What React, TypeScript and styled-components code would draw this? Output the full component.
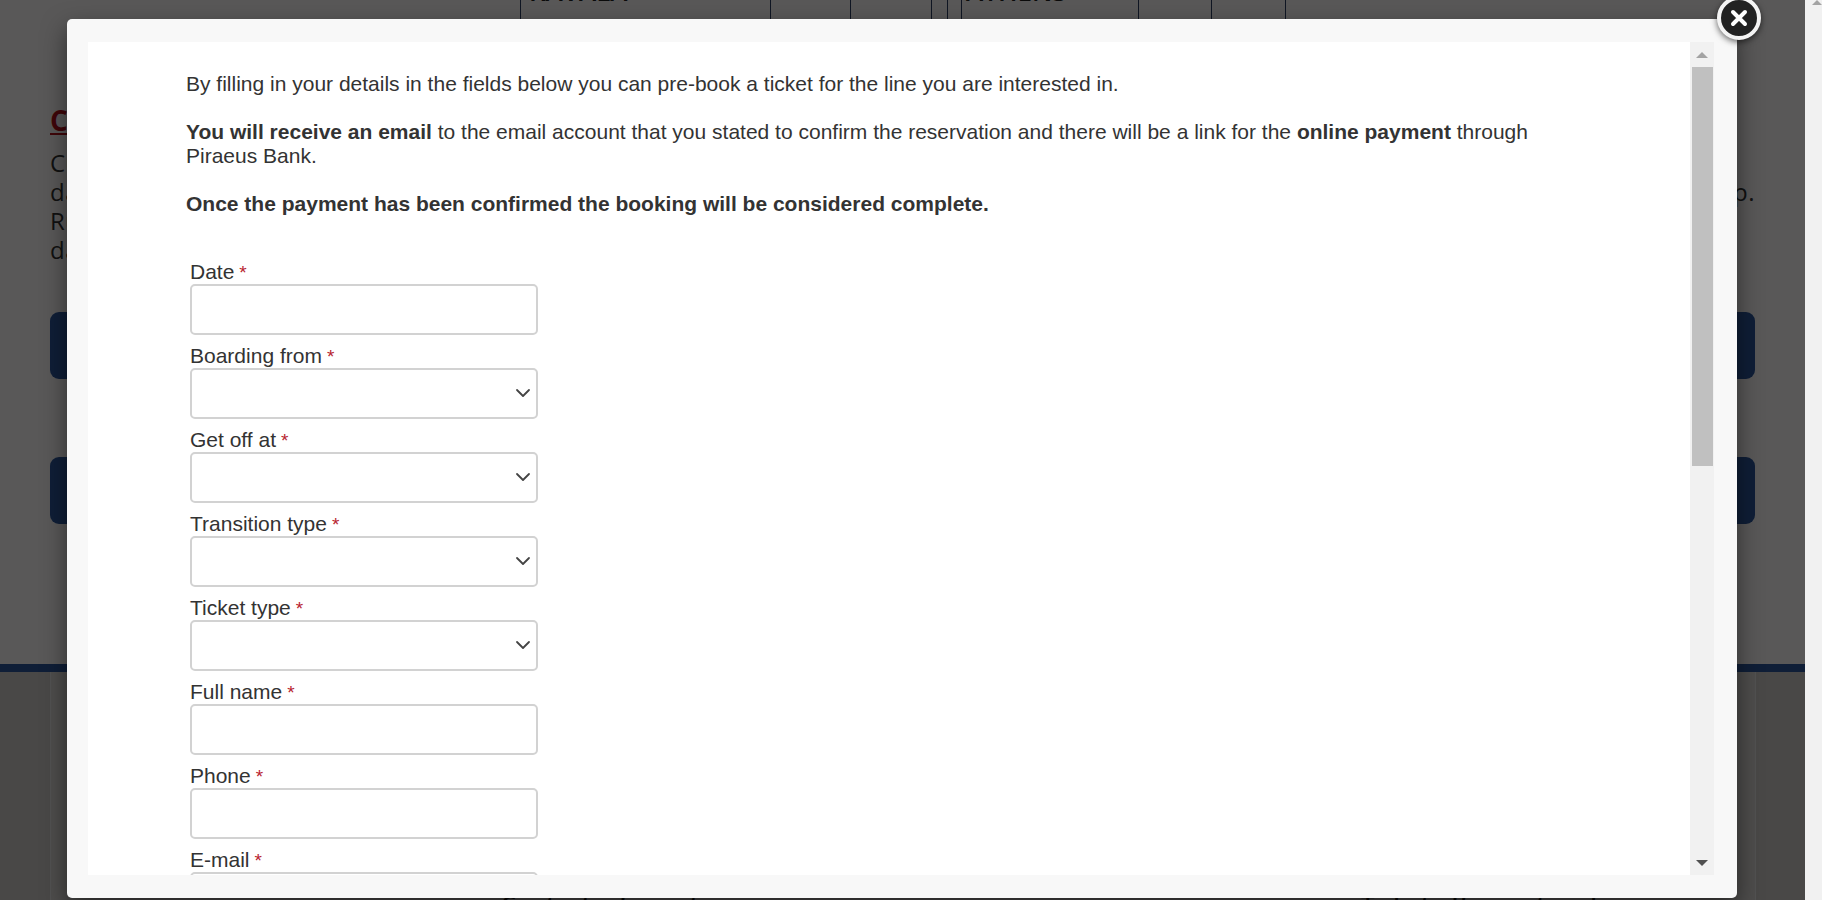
import React from "react";
import styled, { createGlobalStyle } from "styled-components";
import { ChevronDown } from "lucide-react";

const GlobalStyle = createGlobalStyle`
  html, body {
    margin: 0;
    padding: 0;
    height: 100%;
    overflow: hidden;
    background: #fff;
  }
  * {
    box-sizing: border-box;
  }
`;

const Screen = styled.div`
  display: grid;
  grid-template-columns: 1805px 17px;
  height: 900px;
  overflow: hidden;
`;

const Page = styled.div`
  position: relative;
  height: 900px;
  overflow: hidden;
  background: #fffdfc;
  color: #333;
  font-family: "Open Sans", sans-serif;
`;

const PageBody = styled.div`
  padding: 0 50px;
`;

const TableRow = styled.div`
  display: flex;
  margin: -30px 0 0 470px;
  height: 70px;
`;

const Cell = styled.div<{ $w: number; $pad?: number }>`
  width: ${(p) => p.$w}px;
  flex: none;
  border-left: 1px solid #2f3f66;
  padding: 8px 0 0 ${(p) => p.$pad ?? 8}px;
  font-size: 26px;
  line-height: 26px;
  font-weight: 600;
  color: #222;
`;

const Heading = styled.h2`
  margin: 64px 0 0;
  font-size: 28px;
  line-height: 33px;
  font-weight: 700;
  color: #b5121b;
  text-decoration: underline;
`;

const Paragraph = styled.div`
  margin-top: 11px;
  font-size: 24px;
  line-height: 29px;
`;

const ParagraphLine = styled.div`
  display: flex;
  justify-content: space-between;
  white-space: nowrap;
  letter-spacing: 0.5px;
`;

const BlueButton = styled.div<{ $top: number }>`
  margin-top: ${(p) => p.$top}px;
  height: 67px;
  width: 1705px;
  border-radius: 9px;
  background: #2c589f;
`;

const Footer = styled.div`
  margin-top: 140px;
  height: 240px;
  border-top: 8px solid #2c589f;
  padding: 0 49px 0 50px;
  background: #d0cecc;
`;

const FooterInner = styled.div`
  display: flex;
  height: 100%;
  border-left: 1px solid #ececec;
  border-right: 1px solid #ececec;
  background: #dedcda;
  padding: 219px 0 0 450px;
  font-size: 24px;
  line-height: 26px;
  font-weight: 600;
  color: #222;
  white-space: nowrap;
`;

const FooterLabel = styled.div<{ $w: number }>`
  width: ${(p) => p.$w}px;
  flex: none;
`;

const Overlay = styled.div`
  position: absolute;
  inset: 0;
  padding: 19px 68px 2px 67px;
  background: rgba(0, 0, 0, 0.65);
`;

const Modal = styled.div`
  position: relative;
  display: flex;
  height: 879px;
  padding: 23px 23px 23px 21px;
  border-radius: 5px;
  background: #f8f8f8;
  box-shadow: 0 10px 25px rgba(0, 0, 0, 0.5);
`;

const CloseButton = styled.button`
  position: absolute;
  top: -23px;
  right: -24px;
  display: flex;
  align-items: center;
  justify-content: center;
  width: 44px;
  height: 44px;
  padding: 0;
  border: 4px solid #f4f4f4;
  border-radius: 50%;
  background: #222;
  box-shadow: 0 2px 6px rgba(0, 0, 0, 0.6);
`;

const Content = styled.div`
  flex: 1;
  overflow: hidden;
  padding: 30px 98px 0;
  background: #fff;
  color: #333;
  font-family: "Liberation Sans", Arial, sans-serif;
  font-size: 21px;
  line-height: 24px;
`;

const Intro = styled.p`
  margin: 0 0 24px;
`;

const Form = styled.div`
  margin: 36px 0 0 4px;
  width: 348px;
`;

const Field = styled.div`
  margin-bottom: 1px;
`;

const Label = styled.label`
  display: block;
  height: 32px;
  padding-top: 8px;
  line-height: 24px;
`;

const Star = styled.span`
  margin-left: 5px;
  color: #b8232f;
  font-size: 19px;
`;

const TextInput = styled.input`
  display: block;
  width: 100%;
  height: 51px;
  border: 2px solid #d2d2d2;
  border-radius: 5px;
  background: #fff;
`;

const SelectBox = styled.div`
  position: relative;
  height: 51px;
`;

const SelectInput = styled.select`
  display: block;
  width: 100%;
  height: 51px;
  appearance: none;
  border: 2px solid #d2d2d2;
  border-radius: 5px;
  background: #fff;
  color: #444;
  font-size: 21px;
`;

const SelectChevron = styled(ChevronDown)`
  position: absolute;
  top: 13px;
  right: 3px;
  color: #444;
  pointer-events: none;
`;

const ScrollTrack = styled.div`
  display: flex;
  flex-direction: column;
  align-items: center;
  flex: none;
  width: 24px;
  background: #f1f1f1;
`;

const ScrollArrow = styled.div<{ $down?: boolean; $color: string }>`
  flex: none;
  width: 0;
  height: 0;
  margin: ${(p) => (p.$down ? "auto 0 9px" : "10px 0 9px")};
  border-left: 6px solid transparent;
  border-right: 6px solid transparent;
  ${(p) =>
    p.$down
      ? `border-top: 6px solid ${p.$color};`
      : `border-bottom: 6px solid ${p.$color};`}
`;

const ScrollThumb = styled.div`
  flex: none;
  width: 21px;
  height: 399px;
  background: #c0c0c0;
`;

const PageScrollbar = styled.div`
  display: flex;
  justify-content: flex-end;
  height: 900px;
  background: #f1f1f1;
`;

const PageScrollArrow = styled.div`
  width: 0;
  height: 0;
  border-left: 5px solid transparent;
  border-right: 5px solid transparent;
  border-bottom: 5px solid #a3a3a3;
`;

const fields = [
  { label: "Date", select: false },
  { label: "Boarding from", select: true },
  { label: "Get off at", select: true },
  { label: "Transition type", select: true },
  { label: "Ticket type", select: true },
  { label: "Full name", select: false },
  { label: "Phone", select: false },
  { label: "E-mail", select: false },
];

const App: React.FC = () => {
  return (
    <Screen>
      <GlobalStyle />
      <Page>
        <PageBody>
          <TableRow>
            <Cell $w={250}>KAVALA</Cell>
            <Cell $w={80} />
            <Cell $w={81} />
            <Cell $w={16} />
            <Cell $w={14} />
            <Cell $w={177} $pad={4}>ATHENS</Cell>
            <Cell $w={73} />
            <Cell $w={74} />
            <Cell $w={1} />
          </TableRow>
          <Heading>Conditions</Heading>
          <Paragraph>
            <ParagraphLine>Customers</ParagraphLine>
            <ParagraphLine>
              <span>date</span>
              <span>trip.</span>
            </ParagraphLine>
            <ParagraphLine>Rules</ParagraphLine>
            <ParagraphLine>days</ParagraphLine>
          </Paragraph>
          <BlueButton $top={48} />
          <BlueButton $top={78} />
        </PageBody>
        <Footer>
          <FooterInner>
            <FooterLabel $w={860}>Contact information</FooterLabel>
            <FooterLabel $w={240}>Ticket office network</FooterLabel>
          </FooterInner>
        </Footer>
        <Overlay>
          <Modal>
            <CloseButton aria-label="Close">
              <svg width="18" height="18" viewBox="0 0 18 18">
                <path
                  d="M3 3 L15 15 M15 3 L3 15"
                  stroke="#fff"
                  strokeWidth="4"
                  strokeLinecap="round"
                />
              </svg>
            </CloseButton>
            <Content>
              <Intro>
                By filling in your details in the fields below you can pre-book a
                ticket for the line you are interested in.
              </Intro>
              <Intro>
                <b>You will receive an email</b> to the email account that you
                stated to confirm the reservation and there will be a link for the{" "}
                <b>online payment</b> through Piraeus Bank.
              </Intro>
              <Intro>
                <b>Once the payment has been confirmed the booking will be considered complete.</b>
              </Intro>
              <Form>
                {fields.map((f) => (
                  <Field key={f.label}>
                    <Label>
                      {f.label}
                      <Star>*</Star>
                    </Label>
                    {f.select ? (
                      <SelectBox>
                        <SelectInput />
                        <SelectChevron size={24} strokeWidth={1.8} />
                      </SelectBox>
                    ) : (
                      <TextInput />
                    )}
                  </Field>
                ))}
              </Form>
            </Content>
            <ScrollTrack>
              <ScrollArrow $color="#a3a3a3" />
              <ScrollThumb />
              <ScrollArrow $down $color="#505050" />
            </ScrollTrack>
          </Modal>
        </Overlay>
      </Page>
      <PageScrollbar>
        <PageScrollArrow />
      </PageScrollbar>
    </Screen>
  );
};

export default App;
